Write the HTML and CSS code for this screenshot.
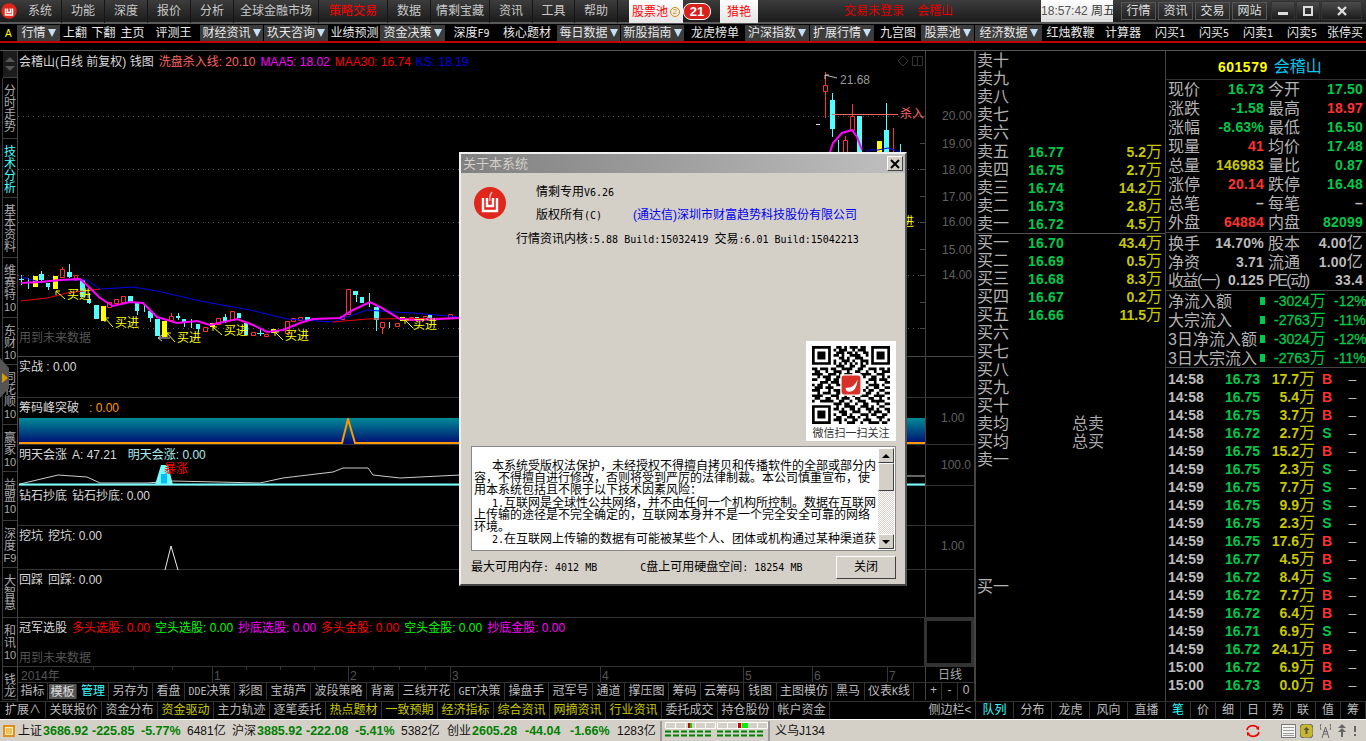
FILE: index.html
```html
<!DOCTYPE html>
<html lang="zh-CN">
<head>
    <meta charset="UTF-8">
    <title>关于本系统</title>
    <link rel="stylesheet" href="styles.css">
</head>
<body>
    <!-- menu -->
    <header class="menubar">
        <nav class="menu-items">
            <span class="menu-logo">
                <svg width="16" height="16" viewBox="0 0 32 32"><circle cx="16" cy="16" r="15.5" fill="#e1261c"/><path d="M9 11v13h14V11M13 11v8h6v-8" fill="none" stroke="#fff" stroke-width="3"/></svg>
            </span>
            <a>系统</a><a>功能</a><a>深度</a><a>报价</a><a>分析</a><a>全球金融市场</a>
            <a class="menu-hot">策略交易</a><a>数据</a><a>情剩宝藏</a><a>资讯</a><a>工具</a><a>帮助</a>
            <i></i>
            <span class="menu-pool">股票池<em>2</em></span>
            <span class="menu-badge"><b>21</b></span>
            <i></i>
            <span class="menu-pool">猎艳</span>
        </nav>
        <div class="menu-status"><span>交易未登录</span><span>会稽山</span></div>
        <div class="clock"><span>18:57:42</span> 周五</div>
        <div class="top-btns"><a>行情</a><a>资讯</a><a>交易</a><a>网站</a></div>
        <div class="win-btns">
            <a><svg width="10" height="10"><rect x="0" y="6" width="10" height="3" fill="#ddd"/></svg></a>
            <a><svg width="10" height="10"><rect x="1" y="1" width="8" height="8" fill="none" stroke="#ddd" stroke-width="2"/></svg></a>
            <a class="win-close"><svg width="10" height="10"><path d="M1 1l8 8M9 1l-8 8" stroke="#ddd" stroke-width="2.4"/></svg></a>
        </div>
    </header>

    <!-- toolbar -->
    <div class="toolbar">
        <div class="tool-items">
            <span class="tool-a">A</span>
            <a class="drop">行情<u></u></a>
            <a>上翻</a><a>下翻</a><a>主页</a><a>评测王</a>
            <a class="drop">财经资讯<u></u></a><a class="drop">玖天咨询<u></u></a>
            <a>业绩预测</a>
            <a class="drop">资金决策<u></u></a>
            <a>深度<span class="mono">F9</span></a><a>核心题材</a>
            <a class="drop">每日数据<u></u></a><a class="drop">新股指南<u></u></a>
            <a>龙虎榜单</a>
            <a class="drop">沪深指数<u></u></a><a class="drop">扩展行情<u></u></a>
            <a>九宫图</a>
            <a class="drop">股票池<u></u></a><a class="drop">经济数据<u></u></a>
            <a>红烛教鞭</a><a>计算器</a><a>闪买<span class="mono">1</span></a><a>闪买<span class="mono">5</span></a><a>闪卖<span class="mono">1</span></a><a>闪卖<span class="mono">5</span></a><a>张停买</a>
        </div>
    </div>

    <main class="main">
        <!-- left vertical tabs -->
        <aside class="side-tabs">
            <div class="side-scroll"><u class="up"></u><u class="down"></u></div>
            <a>分<br>时<br>走<br>势</a>
            <a class="on">技<br>术<br>分<br>析</a>
            <a>基<br>本<br>资<br>料</a>
            <a>维<br>赛<br>特<br><small>10</small></a>
            <a>东<br>财<br><small>10</small></a>
            <a>同<br>花<br>顺<br><small>10</small></a>
            <a>赢<br>家<br><small>10</small></a>
            <a>益<br>盟<br><small>10</small></a>
            <a>深<br>度<br><small>F9</small></a>
            <a>大<br>智<br>慧</a>
            <a>和<br>讯<br><small>10</small></a>
            <a>钱<br>龙</a>
        </aside>
        <div class="side-handle"><u></u></div>

        <!-- chart column -->
        <section class="chart">
            <div class="pane pane-main">
                <div class="pane-label">
                    <span>会稽山(日线 前复权) 钱图</span>
                    <span class="pink">洗盘杀入线: 20.10</span>
                    <span class="magenta">MAA5: 18.02</span>
                    <span class="red">MAA30: 16.74</span>
                    <span class="blue">KS: 18.19</span>
                </div>
                <svg class="pane-svg" width="957" height="306" viewBox="18 51 957 306">
                    <path class="grid-dots" d="M18 116.5H925M18 169.5H925M18 222.5H925M18 275.5H925M18 328.5H925"/>
                    <path class="axis-line" d="M925.5 51V357M920 116.5h5M920 143.5h5M920 169.5h5M920 196.5h5M920 222.5h5M920 249.5h5M920 275.5h5M920 302.5h5M920 328.5h5"/>
                    <g class="axis-text">
                        <text x="942" y="120">20.00</text><text x="942" y="148">19.00</text><text x="942" y="174">18.00</text>
                        <text x="942" y="201">17.00</text><text x="942" y="226">16.00</text><text x="942" y="254">15.00</text><text x="942" y="279">14.00</text>
                    </g>
                    <path class="mark-icon" d="M903 56l5 5-5 5-5-5zM912.500 56.500h10v9h-10zM917.500 56.500v9"/>

                    <path class="wick-cy" d="M21.500 275V285M19 279.500h5M28.500 278V289M41.500 271V283M48.500 283V290M69.500 264V278M89.500 293V304M137.500 311V315M144.500 305V312M150.500 318V322M178.500 313V320M184.500 322V327M191.500 319V328M198.500 329V332M225.500 314V323M260.500 328V336M257 333.500h7M356.500 295V302M369.500 293V307M376.500 320V331M389.500 322V328M832.500 93V137M838.500 140V152M886.500 103V130M900.500 144V152"/>
                    <path class="body-cy" d="M39 274h5v6h-5zM46 283h4v4h-4zM67 272h5v5h-5zM80 280h5v17h-5zM87 299h4v4h-4zM94 305h5v14h-5zM128 296h5v6h-5zM135 303h4v8h-4zM148 311h5v7h-5zM155 319h5v17h-5zM176 316h4v2h-4zM182 319h4v3h-4zM196 324h4v5h-4zM223 317h4v5h-4zM237 313h4v5h-4zM244 323h4v12h-4zM305 317h5v3h-5zM353 291h5v4h-5zM360 297h4v6h-4zM374 307h5v13h-5zM415 317h4v3h-4zM428 315h4v3h-4zM830 100h5v29h-5zM857 116h5v36h-5zM884 130h5v22h-5z"/>
                    <path class="body-up" d="M62.500 267V269M171.500 313V316M382.500 327V334M825.500 72V85M825.500 92V118M852.500 104V116M893.500 128V152M845.500 136V140M60.500 269.500h4v8h-4zM74.500 275.500h3v5h-3zM107.500 302.500h4v5h-4zM114.500 299.500h4v4h-4zM121.500 296.500h4v6h-4zM169.500 316.500h4v4h-4zM203.500 327.500h4v4h-4zM216.500 318.500h4v6h-4zM230.500 311.500h4v9h-4zM251.500 332.500h4v3h-4zM264.500 334.500h4v2h-4zM285.500 321.500h4v12h-4zM291.500 318.500h4v3h-4zM298.500 317.500h4v3h-4zM340.500 316.500h4v3h-4zM346.500 289.500h4v25h-4zM380.500 322.500h4v5h-4zM395.500 323.500h4v3h-4zM409.500 317.500h4v3h-4zM423.500 316.500h4v3h-4zM448.500 314.500h4v4h-4zM823.500 85.500h4v6h-4zM850.500 116.500h4v14h-4zM843.500 140.500h4v13h-4z"/>
                    <path class="body-ye" d="M33 276h5v11h-5zM53 276h5v13h-5zM101 306h5v15h-5zM162 321h5v16h-5zM210 323h5v4h-5zM271 329h5v4h-5zM400 317h5v4h-5zM877 141h5v11h-5z"/>

                    <polyline class="line-blue" points="21,277 40,282 67,280 87,280 100,289 133,287 157,291 200,301 250,310 287,319 333,322 367,310 393,312 413,313 460,317 820,200 868,150 878,150 888,148 900,152"/>
                    <polyline class="line-red" points="21,301 47,298 67,293 100,289"/>
                    <polyline class="line-red" points="333,322 367,319 460,318"/>
                    <polyline class="line-ma" points="21,283 40,282 60,280 80,279 90,288 100,298 113,306 130,302 143,303 157,317 177,323 197,321 210,325 237,319 253,325 267,332 283,330 300,323 313,319 340,318 353,310 370,302 380,307 400,319 417,320 460,318"/>
                    <polyline class="line-ma" points="830,152 833,143 842,133 852,130 857,137 862,150"/>

                    <path class="line-kill" d="M832 114.500H898"/>
                    <text class="txt-kill" x="900" y="118">杀入</text>
                    <path class="arrow-hi" d="M825 75l12 3M825 75h4M825 75v4"/>
                    <text class="txt-hi" x="840" y="84">21.68</text>
                    <path class="dash" d="M816 124.500h4"/>

                    <path class="arrow-buy" d="M56 291l9 8M56 291h4M56 291v4M105 318l8 9M105 318h4M105 318v4M167 333l8 9M167 333h4M167 333v4M213 327l9 8M213 327h4M213 327v4M275 332l8 8M275 332h4M275 332v4M405 320l8 8M405 320h4M405 320v4"/>
                    <g class="txt-buy">
                        <text x="67" y="299">买进</text><text x="115" y="327">买进</text><text x="177" y="342">买进</text>
                        <text x="224" y="335">买进</text><text x="285" y="340">买进</text><text x="413" y="329">买进</text><text x="890" y="226">买进</text>
                    </g>
                    <path class="arrow-white" d="M158 338h12M158 338l4-3M158 338l4 3"/>
                    <text class="txt-future" x="19" y="342">用到未来数据</text>
                </svg>
            </div>

            <div class="pane pane-a">
                <div class="plot"><div class="pane-label"><span>实战 : 0.00</span></div></div>
                <div class="axis"></div>
            </div>

            <div class="pane pane-b">
                <div class="plot">
                    <div class="pane-label"><span>筹码峰突破</span><span class="orange">: 0.00</span></div>
                    <div class="chip-bar">
                        <svg width="906" height="26" viewBox="19 418 906 26"><path class="line-chip" d="M19 443H342L348 419L355 443H925"/></svg>
                    </div>
                </div>
                <div class="axis">1.00</div>
            </div>

            <div class="pane pane-c">
                <div class="plot">
                    <div class="pane-label"><span>明天会涨</span><span>A: 47.21</span><span class="pale">明天会涨: 0.00</span></div>
                    <svg class="pane-svg" width="907" height="41" viewBox="18 445 907 41">
                        <polyline class="line-white" points="20,484 58,475 87,477 100,483 147,483 173,481 260,483 283,478 333,472 343,468 368,468 373,475 400,478 460,475 925,476"/>
                        <path class="spike" d="M155 485L161 465H168L173 485Z"/>
                        <rect class="spike-in" x="161" y="474" width="6" height="11"/>
                        <path class="line-cy" d="M19 484.500H925"/>
                        <text class="txt-up" x="164" y="473">暴涨</text>
                    </svg>
                </div>
                <div class="axis">100.0</div>
            </div>

            <div class="pane pane-d">
                <div class="plot"><div class="pane-label"><span>钻石抄底</span><span>钻石抄底: 0.00</span></div></div>
                <div class="axis"></div>
            </div>

            <div class="pane pane-e">
                <div class="plot">
                    <div class="pane-label"><span>挖坑</span><span>挖坑: 0.00</span></div>
                    <svg class="pane-svg" width="907" height="44" viewBox="18 526 907 44"><path class="line-peak" d="M165 570L171 546L178 570"/></svg>
                </div>
                <div class="axis">1.00</div>
            </div>

            <div class="pane pane-f">
                <div class="plot"><div class="pane-label"><span>回踩</span><span>回踩: 0.00</span></div></div>
                <div class="axis"></div>
            </div>

            <div class="pane pane-g">
                <div class="plot">
                    <div class="pane-label">
                        <span>冠军选股</span><span class="red">多头选股: 0.00</span><span class="green">空头选股: 0.00</span>
                        <span class="magenta">抄底选股: 0.00</span><span class="red">多头金股: 0.00</span>
                        <span class="green">空头金股: 0.00</span><span class="magenta">抄底金股: 0.00</span>
                    </div>
                    <div class="future">用到未来数据</div>
                </div>
                <div class="axis axis-box"></div>
            </div>

            <div class="date-row">
                <svg width="907" height="16" viewBox="18 667 907 16">
                    <path class="date-ticks" d="M93.500 667v3M133.500 667v3M172.500 667v3M212.500 667v16M246.500 667v3M280.500 667v3M314.500 667v3M348.500 667v16M373.500 667v3M399.500 667v3M425.500 667v3M450.500 667v16M600.500 667v16M743.500 667v16M812.500 667v16M887.500 667v16"/>
                    <g class="date-text">
                        <text x="21" y="680">2014年</text><text x="214" y="680">1</text><text x="350" y="680">2</text><text x="452" y="680">3</text>
                        <text x="602" y="680">4</text><text x="745" y="680">5</text><text x="814" y="680">6</text><text x="889" y="680">7</text>
                    </g>
                </svg>
                <span class="date-kind">日线</span>
            </div>

            <div class="tab-row">
                <div class="tabs-a">
                    <a>指标</a><a class="on">模板</a><a class="cyan">管理</a><a>另存为</a><a>看盘</a><a><span class="mono">DDE</span>决策</a><a>彩图</a><a>宝葫芦</a><a>波段策略</a><a>背离</a><a>三线开花</a>
                    <a><span class="mono">GET</span>决策</a><a>操盘手</a><a>冠军号</a><a>通道</a><a>撑压图</a><a>筹码</a><a>云筹码</a><a>钱图</a><a>主图模仿</a><a>黑马</a><a>仪表<span class="mono">K</span>线</a>
                </div>
                <div class="zoom-btns"><a>+</a><a>-</a><a>0</a></div>
            </div>
        </section>

        <!-- order book -->
        <section class="book">
            <div class="book-row"><span>卖十</span></div>
            <div class="book-row"><span>卖九</span></div>
            <div class="book-row"><span>卖八</span></div>
            <div class="book-row"><span>卖七</span></div>
            <div class="book-row"><span>卖六</span></div>
            <div class="book-row"><span>卖五</span><b>16.77</b><em>5.2<i>万</i></em></div>
            <div class="book-row"><span>卖四</span><b>16.75</b><em>2.7<i>万</i></em></div>
            <div class="book-row"><span>卖三</span><b>16.74</b><em>14.2<i>万</i></em></div>
            <div class="book-row"><span>卖二</span><b>16.73</b><em>2.8<i>万</i></em></div>
            <div class="book-row"><span>卖一</span><b>16.72</b><em>4.5<i>万</i></em></div>
            <div class="book-line"></div>
            <div class="book-row"><span>买一</span><b>16.70</b><em>43.4<i>万</i></em></div>
            <div class="book-row"><span>买二</span><b>16.69</b><em>0.5<i>万</i></em></div>
            <div class="book-row"><span>买三</span><b>16.68</b><em>8.3<i>万</i></em></div>
            <div class="book-row"><span>买四</span><b>16.67</b><em>0.2<i>万</i></em></div>
            <div class="book-row"><span>买五</span><b>16.66</b><em>11.5<i>万</i></em></div>
            <div class="book-row"><span>买六</span></div>
            <div class="book-row"><span>买七</span></div>
            <div class="book-row"><span>买八</span></div>
            <div class="book-row"><span>买九</span></div>
            <div class="book-row"><span>买十</span></div>
            <div class="book-row"><span>卖均</span><s>总卖</s></div>
            <div class="book-row"><span>买均</span><s>总买</s></div>
            <div class="book-row"><span>卖一</span></div>
            <div class="book-row book-low"><span>买一</span></div>
        </section>

        <!-- quote -->
        <section class="quote">
            <div class="q-head"><b>601579</b><span>会稽山</span></div>
            <div class="q-block">
                <div class="q-row"><span>现价</span><b class="g">16.73</b><span>今开</span><b class="g">17.50</b></div>
                <div class="q-row"><span>涨跌</span><b class="g">-1.58</b><span>最高</span><b class="r">18.97</b></div>
                <div class="q-row"><span>涨幅</span><b class="g">-8.63%</b><span>最低</span><b class="g">16.50</b></div>
                <div class="q-row"><span>现量</span><b class="r">41</b><span>均价</span><b class="g">17.48</b></div>
                <div class="q-row"><span>总量</span><b class="y">146983</b><span>量比</span><b class="g">0.87</b></div>
                <div class="q-row"><span>涨停</span><b class="r">20.14</b><span>跌停</span><b class="g">16.48</b></div>
                <div class="q-row"><span>总笔</span><b class="w">–</b><span>每笔</span><b class="w">–</b></div>
                <div class="q-row"><span>外盘</span><b class="r">64884</b><span>内盘</span><b class="g">82099</b></div>
            </div>
            <div class="q-block">
                <div class="q-row"><span>换手</span><b class="w">14.70%</b><span>股本</span><b class="w">4.00<i>亿</i></b></div>
                <div class="q-row"><span>净资</span><b class="w">3.71</b><span>流通</span><b class="w">1.00<i>亿</i></b></div>
                <div class="q-row"><span class="tight">收益(一)</span><b class="w">0.125</b><span class="tight">PE(动)</span><b class="w">33.4</b></div>
            </div>
            <div class="q-block">
                <div class="flow-row"><span>净流入额</span><u></u><b>-3024<i>万</i></b><b>-12%</b></div>
                <div class="flow-row"><span>大宗流入</span><u></u><b>-2763<i>万</i></b><b>-11%</b></div>
                <div class="flow-row"><span>3日净流入额</span><u></u><b>-3024<i>万</i></b><b>-12%</b></div>
                <div class="flow-row"><span>3日大宗流入</span><u></u><b>-2763<i>万</i></b><b>-11%</b></div>
            </div>
            <div class="ticks">
                <div class="tick"><b>14:58</b><b class="g">16.73</b><b class="y">17.7<i>万</i></b><b class="r">B</b><span>–</span></div>
                <div class="tick"><b>14:58</b><b class="g">16.75</b><b class="y">5.4<i>万</i></b><b class="r">B</b><span>–</span></div>
                <div class="tick"><b>14:58</b><b class="g">16.75</b><b class="y">3.7<i>万</i></b><b class="r">B</b><span>–</span></div>
                <div class="tick"><b>14:58</b><b class="g">16.72</b><b class="y">2.7<i>万</i></b><b class="g">S</b><span>–</span></div>
                <div class="tick"><b>14:59</b><b class="g">16.75</b><b class="y">15.2<i>万</i></b><b class="r">B</b><span>–</span></div>
                <div class="tick"><b>14:59</b><b class="g">16.75</b><b class="y">2.3<i>万</i></b><b class="g">S</b><span>–</span></div>
                <div class="tick"><b>14:59</b><b class="g">16.75</b><b class="y">7.7<i>万</i></b><b class="g">S</b><span>–</span></div>
                <div class="tick"><b>14:59</b><b class="g">16.75</b><b class="y">9.9<i>万</i></b><b class="g">S</b><span>–</span></div>
                <div class="tick"><b>14:59</b><b class="g">16.75</b><b class="y">2.3<i>万</i></b><b class="g">S</b><span>–</span></div>
                <div class="tick"><b>14:59</b><b class="g">16.75</b><b class="y">17.6<i>万</i></b><b class="r">B</b><span>–</span></div>
                <div class="tick"><b>14:59</b><b class="g">16.77</b><b class="y">4.5<i>万</i></b><b class="r">B</b><span>–</span></div>
                <div class="tick"><b>14:59</b><b class="g">16.72</b><b class="y">8.4<i>万</i></b><b class="g">S</b><span>–</span></div>
                <div class="tick"><b>14:59</b><b class="g">16.72</b><b class="y">7.7<i>万</i></b><b class="r">B</b><span>–</span></div>
                <div class="tick"><b>14:59</b><b class="g">16.72</b><b class="y">6.4<i>万</i></b><b class="r">B</b><span>–</span></div>
                <div class="tick"><b>14:59</b><b class="g">16.71</b><b class="y">6.9<i>万</i></b><b class="g">S</b><span>–</span></div>
                <div class="tick"><b>14:59</b><b class="g">16.72</b><b class="y">24.1<i>万</i></b><b class="r">B</b><span>–</span></div>
                <div class="tick"><b>15:00</b><b class="g">16.72</b><b class="y">6.9<i>万</i></b><b class="r">B</b><span>–</span></div>
                <div class="tick"><b>15:00</b><b class="g">16.73</b><b class="y">0.0<i>万</i></b><b class="r">B</b><span>–</span></div>
            </div>
        </section>
    </main>

    <!-- lower tab strip -->
    <div class="strip">
        <div class="strip-left">
            <a>扩展∧</a><a>关联报价</a><a>资金分布</a><a class="y">资金驱动</a><a>主力轨迹</a><a>逐笔委托</a><a class="y">热点题材</a><a class="y">一致预期</a>
            <a class="y">经济指标</a><a class="y">综合资讯</a><a class="y">网摘资讯</a><a class="y">行业资讯</a><a>委托成交</a><a>持仓股份</a><a>帐户资金</a>
        </div>
        <a class="strip-side">侧边栏&lt;</a>
        <div class="strip-book"><a class="cyan">队列</a><a>分布</a><a>龙虎</a><a>风向</a><a>直播</a></div>
        <div class="strip-quote"><a class="cyan">笔</a><a>价</a><a>细</a><a>日</a><a>势</a><a>联</a><a>值</a><a>筹</a></div>
    </div>

    <!-- status bar -->
    <footer class="status">
        <span class="st-icon"><u></u></span>
        <span>上证</span><b>3686.92</b><b>-225.85</b><b>-5.77%</b><span>6481亿</span>
        <span>沪深</span><b>3885.92</b><b>-222.08</b><b>-5.41%</b><span>5382亿</span>
        <span>创业</span><b>2605.28</b><b>-44.04</b><b>-1.66%</b><span>1283亿</span>
        <i class="st-sep"></i>
        <svg width="51" height="17" viewBox="0 0 51 17">
            <path class="meter-box" d="M.5 .5h50v6H.5zM10.500 .5v6M20.500 .5v6M30.500 .5v6M40.500 .5v6"/>
            <rect x="23" y="1" width="2" height="5" fill="#c00"/><rect x="25" y="1" width="2" height="5" fill="#0d0"/>
            <path class="meter-dash" d="M0 9.500h6M8 9.500h6M16 9.500h6M24 9.500h6M32 9.500h6M40 9.500h6M0 13.500h6M8 13.500h6M16 13.500h6M24 13.500h6M32 13.500h6M40 13.500h6"/>
        </svg>
        <svg width="51" height="17" viewBox="0 0 51 17">
            <path class="meter-box" d="M.5 .5h50v6H.5zM10.500 .5v6M20.500 .5v6M30.500 .5v6M40.500 .5v6"/>
            <rect x="21" y="1" width="3" height="5" fill="#c00"/><rect x="25" y="1" width="6" height="5" fill="#0e0"/>
            <path class="meter-dash" d="M0 9.500h6M8 9.500h6M16 9.500h6M24 9.500h6M32 9.500h6M40 9.500h6M0 13.500h6M8 13.500h6M16 13.500h6M24 13.500h6M32 13.500h6M40 13.500h6"/>
        </svg>
        <i class="st-sep"></i>
        <span class="st-city">义乌J134</span>
        <div class="st-icons">
            <svg width="16" height="16" viewBox="0 0 16 16"><path d="M2 7a6 5 0 0 1 11-2M14 9a6 5 0 0 1-11 2" fill="none" stroke="#e00" stroke-width="1.6"/><path d="M14 7l-3-1 3-3zM2 9l3 1-3 3z" fill="#e00"/></svg>
            <svg width="15" height="14" viewBox="0 0 15 14"><rect x=".5" y=".5" width="14" height="13" fill="#f4f4f4" stroke="#777"/><path d="M2 3.500h11M2 6.500h11M2 9.500h11M2 11.500h11" stroke="#999"/></svg>
            <svg width="13" height="14" viewBox="0 0 13 14"><rect width="13" height="14" rx="4" fill="#c8b830" stroke="#666"/><path d="M6.500 3l3 3h-2v4h-2V6h-2z" fill="#554"/></svg>
            <svg width="11" height="16" viewBox="0 0 11 16"><path d="M5.500 4L2 15M5.500 4L9 15M3 11h5M3.500 8.500h4M1 1q-2 3 0 6M10 1q2 3 0 6" fill="none" stroke="#666"/></svg>
            <svg width="8" height="13" viewBox="0 0 8 13"><path d="M4 0l4 4H0zM4 4l4 4H0zM3 8h2v5H3z" fill="#666"/></svg>
            <svg width="4" height="10" viewBox="0 0 4 10"><path d="M1 0h2v6H1zM1 8h2v2H1z" fill="#666"/></svg>
        </div>
    </footer>

    <!-- about dialog -->
    <div class="dialog">
        <div class="dlg-title">
            <span>关于本系统</span>
            <a class="dlg-x"><svg width="10" height="10"><path d="M1 1l8 8M9 1l-8 8" stroke="#000" stroke-width="2"/></svg></a>
        </div>
        <div class="dlg-body">
            <div class="dlg-head">
                <svg class="dlg-logo" width="32" height="32" viewBox="0 0 32 32">
                    <circle cx="16" cy="16" r="16" fill="#e1261c"/>
                    <path d="M9 11v13h14V11M13 11v8h6v-8" fill="none" stroke="#fff" stroke-width="2.4"/>
                    <path d="M18 5q-3 4-2 9" fill="none" stroke="#fbb" stroke-width="1.4"/>
                </svg>
                <div class="dlg-lines">
                    <div>情剩专用<span class="mono">V6.26</span></div>
                    <div class="dlg-copy"><span>版权所有<span class="mono">(C)</span></span><span class="dlg-link">(通达信)深圳市财富趋势科技股份有限公司</span></div>
                </div>
            </div>
            <div class="dlg-kernel">行情资讯内核<span class="mono">:5.88 Build:15032419 </span>交易<span class="mono">:6.01 Build:15042213</span></div>
            <div class="qr">
                <svg width="78" height="78" viewBox="0 0 29 29">
                    <defs><path id="finder" d="M0 0h7v7H0zM1 1v5h5V1zM2 2h3v3H2z" fill-rule="evenodd"/></defs>
                    <use href="#finder"/><use href="#finder" x="22"/><use href="#finder" y="22"/>
                    <path class="qr-dots" d="M9 .5h2M12 .5h1M14 .5h3M18 .5h2M8 1.500h1M10 1.500h3M15 1.500h1M17 1.500h3M9 2.500h3M13 2.500h2M16 2.500h1M19 2.500h2M8 3.500h2M11 3.500h1M14 3.500h4M20 3.500h1M10 4.500h2M13 4.500h1M16 4.500h3M8 5.500h1M11 5.500h3M15 5.500h1M18 5.500h3M8 6.500h1M10 6.500h1M12 6.500h1M14 6.500h1M16 6.500h1M18 6.500h1M20 6.500h1M9 7.500h3M14 7.500h2M18 7.500h2M0 8.500h2M3 8.500h3M7 8.500h2M11 8.500h4M17 8.500h2M21 8.500h3M25 8.500h2M28 8.500h1M1 9.500h2M5 9.500h1M8 9.500h3M13 9.500h1M16 9.500h2M20 9.500h1M23 9.500h1M26 9.500h3M0 10.500h4M6 10.500h3M10 10.500h1M12 10.500h3M18 10.500h4M24 10.500h3M2 11.500h1M4 11.500h3M9 11.500h3M19 11.500h1M22 11.500h2M26 11.500h1M28 11.500h1M0 12.500h2M5 12.500h2M8 12.500h2M21 12.500h3M25 12.500h3M3 13.500h3M7 13.500h3M20 13.500h1M23 13.500h1M27 13.500h2M0 14.500h1M2 14.500h2M6 14.500h1M9 14.500h2M21 14.500h4M26 14.500h1M1 15.500h3M5 15.500h3M20 15.500h1M23 15.500h2M27 15.500h2M0 16.500h3M6 16.500h1M8 16.500h3M12 16.500h1M19 16.500h1M21 16.500h2M25 16.500h2M2 17.500h1M4 17.500h3M9 17.500h3M14 17.500h4M20 17.500h2M24 17.500h1M27 17.500h2M0 18.500h4M7 18.500h3M12 18.500h1M15 18.500h1M18 18.500h3M23 18.500h4M1 19.500h2M5 19.500h2M9 19.500h1M11 19.500h3M16 19.500h2M21 19.500h2M25 19.500h1M28 19.500h1M0 20.500h1M3 20.500h5M10 20.500h2M14 20.500h1M17 20.500h3M22 20.500h5M8 21.500h3M12 21.500h2M16 21.500h1M19 21.500h2M24 21.500h1M27 21.500h2M9 22.500h1M12 22.500h4M18 22.500h3M22 22.500h1M25 22.500h2M8 23.500h2M11 23.500h1M14 23.500h2M17 23.500h1M20 23.500h3M24 23.500h1M27 23.500h2M10 24.500h3M15 24.500h3M21 24.500h1M23 24.500h3M28 24.500h1M8 25.500h1M11 25.500h2M14 25.500h1M18 25.500h3M22 25.500h2M26 25.500h2M9 26.500h2M13 26.500h3M17 26.500h1M20 26.500h1M24 26.500h3M8 27.500h3M12 27.500h1M15 27.500h2M19 27.500h3M25 27.500h1M28 27.500h1M10 28.500h1M13 28.500h3M18 28.500h1M21 28.500h4M26 28.500h2"/>
                    <rect x="10.500" y="10.500" width="8" height="8" fill="#fff"/>
                    <rect x="11" y="11" width="7" height="7" rx="1" fill="#d8312a"/>
                    <path d="M12.500 15.500q3 .5 4.500-3-.5 4.500-3 4.500-1.500 0-1.500-1.500z" fill="#fff"/>
                </svg>
                <span>微信扫一扫关注</span>
            </div>
            <div class="terms">
                <div class="terms-text">
                    <div class="indent">本系统受版权法保护，未经授权不得擅自拷贝和传播软件的全部或部分内</div>
                    <div>容，不得擅自进行修改，否则将受到严厉的法律制裁。本公司慎重宣布，使</div>
                    <div>用本系统包括且不限于以下技术因素风险：</div>
                    <div class="indent"><span class="mono">1.</span>互联网是全球性公共网络，并不由任何一个机构所控制。数据在互联网</div>
                    <div>上传输的途径是不完全确定的，互联网本身并不是一个完全安全可靠的网络</div>
                    <div>环境。</div>
                    <div class="indent"><span class="mono">2.</span>在互联网上传输的数据有可能被某些个人、团体或机构通过某种渠道获</div>
                </div>
                <div class="scroll">
                    <a><u class="up"></u></a>
                    <a class="thumb"></a>
                    <i></i>
                    <a><u class="down"></u></a>
                </div>
            </div>
            <div class="dlg-foot">
                <span>最大可用内存<span class="mono">: 4012 MB</span></span>
                <span class="dlg-disk"><span class="mono">C</span>盘上可用硬盘空间<span class="mono">: 18254 MB</span></span>
                <a class="dlg-btn">关闭</a>
            </div>
        </div>
    </div>
</body>
</html>
```

FILE: styles.css
```css
* {
  box-sizing: border-box;
}

html, body {
  margin: 0;
  height: 741px;
  overflow: hidden;
}

body {
  width: 1366px;
  position: relative;
  background-color: #000;
  color: #c0c0c0;
  font-family: "Liberation Sans", "Noto Sans CJK SC", sans-serif;
  font-size: 12px;
  line-height: 14px;
  display: flex;
  flex-direction: column;
}

a {
  display: block;
  text-decoration: none;
}

i, em, u, s {
  font-style: normal;
  text-decoration: none;
}

.mono {
  font-family: "DejaVu Sans Mono", monospace;
  font-size: 10px;
}

/* menu */
.menubar {
  height: 24px;
  display: flex;
  align-items: stretch;
  background: linear-gradient(#3c3c3c, #1e1e1e 90%);
  border-bottom: 2px solid #5a5a5a;
}

.menu-items {
  display: grid;
  grid-template-columns: 19px 43px 43px 43px 43px 43px 85px 69px 43px 59px 43px 42px 43px 11px 54px 29px 8px 38px;
  width: 758px;
}

.menu-items > a {
  text-align: center;
  line-height: 23px;
  color: #c8c8c8;
  border-right: 1px solid #161616;
}

.menu-items > a.menu-hot {
  color: #f00;
}

.menu-logo {
  padding: 3px 0 0 1px;
}

.menu-pool {
  display: flex;
  align-items: center;
  justify-content: center;
  gap: 2px;
  color: #f00;
  background: linear-gradient(#fff, #e4e4e4);
}

.menu-pool em {
  width: 10px;
  height: 10px;
  border: 1px solid #d08a00;
  border-radius: 50%;
  color: #d08a00;
  font-size: 8px;
  line-height: 8px;
  text-align: center;
}

.menu-badge {
  display: flex;
  align-items: center;
}

.menu-badge b {
  width: 28px;
  height: 17px;
  border: 1px solid #fff;
  border-radius: 8px;
  background: #d8201c;
  color: #fff;
  line-height: 15px;
  font-size: 13px;
  text-align: center;
}

.menu-status {
  display: flex;
  gap: 13px;
  margin-left: 86px;
  color: #e00000;
  line-height: 23px;
}

.clock {
  width: 72px;
  margin: 0 0 0 88px;
  background: linear-gradient(#fff, #dcdcdc);
  color: #333;
  line-height: 23px;
  text-align: center;
  white-space: nowrap;
}

.clock span {
  color: #555;
  font-size: 12px;
}

.top-btns {
  display: flex;
  gap: 2px;
  margin-left: 8px;
  padding: 2px 0;
}

.top-btns a {
  width: 35px;
  border: 1px solid #555;
  background: linear-gradient(#3e3e3e, #222);
  color: #ddd;
  text-align: center;
  line-height: 16px;
}

.win-btns {
  display: flex;
  gap: 1px;
  margin-left: 4px;
  padding: 1px 0 2px;
}

.win-btns a {
  width: 24px;
  display: flex;
  align-items: center;
  justify-content: center;
  background: linear-gradient(#4c4c4c, #1c1c1c);
  border: 1px solid #333;
}

.win-btns .win-close {
  width: 41px;
}

/* toolbar */
.toolbar {
  height: 27px;
  background: #000;
  border-bottom: 1px solid #555;
}

.tool-items {
  height: 19px;
  border-bottom: 2px solid #c00000;
  display: grid;
  grid-template-columns: 17px 44px 28px 29px 29px 53px 64px 65px 51px 66px 51px 60px 64px 64px 60px 65px 65px 46px 54px 68px 55px 50px 44px 44px 44px 44px 42px;
  align-items: start;
}

.tool-items a {
  text-align: center;
  line-height: 19px;
  color: #e8e8e8;
  white-space: nowrap;
  overflow: hidden;
}

.tool-items .drop {
  margin-right: 1px;
  background: #3c3c3c;
  height: 16px;
  line-height: 16px;
  margin-top: 1px;
  display: flex;
  align-items: center;
  justify-content: center;
  gap: 2px;
}

.drop u {
  width: 0;
  height: 0;
  border-left: 4px solid transparent;
  border-right: 4px solid transparent;
  border-top: 8px solid #c8e0f4;
}

.tool-a {
  color: #ff0;
  padding-left: 5px;
  line-height: 19px;
  font-size: 10px;
}

/* main */
.main {
  height: 650px;
  display: flex;
  position: relative;
}

.side-tabs {
  width: 18px;
  display: grid;
  grid-template-rows: 27px 61px 59px 60px 60px 47px 60px 47px 49px 47px 50px 49px 33px;
  border-right: 1px solid #444;
  background: #000;
}

.side-scroll {
  margin-left: 3px;
  display: flex;
  flex-direction: column;
  align-items: center;
  justify-content: center;
  gap: 4px;
  background: #1c1c1c;
  border-bottom: 1px solid #444;
}

.side-scroll u.up, .side-scroll u.down {
  border-style: solid;
  border-color: transparent;
  border-width: 5px;
}

.side-scroll u.up {
  border-bottom-color: #555;
  border-top-width: 0;
}

.side-scroll u.down {
  border-top-color: #555;
  border-bottom-width: 0;
}

.side-tabs a {
  margin-left: 2px;
  border-bottom: 1px solid #3a3a3a;
  border-left: 1px solid #3a3a3a;
  text-align: center;
  padding-top: 7px;
  line-height: 12px;
  color: #aaa;
  overflow: hidden;
}

.side-tabs a.on {
  color: #4ff;
}

.side-tabs small {
  font-size: 11px;
}

.side-handle {
  position: absolute;
  left: 0;
  top: 307px;
  width: 9px;
  height: 40px;
  background: #555;
  clip-path: polygon(0 0, 100% 25%, 100% 75%, 0 100%);
}

.side-handle u {
  position: absolute;
  left: 2px;
  top: 15px;
  border-left: 6px solid #d89a00;
  border-top: 5px solid transparent;
  border-bottom: 5px solid transparent;
}

/* chart */
.chart {
  width: 957px;
  display: flex;
  flex-direction: column;
  border-right: 1px solid #444;
}

.pane {
  display: flex;
  position: relative;
  border-bottom: 1px solid #333;
}

.pane-main { height: 306px; display: block; border-color: #444; }
.pane-main .pane-label { padding-top: 4px; }
.pane-a { height: 41px; }
.pane-b { height: 47px; }
.pane-c { height: 41px; }
.pane-d { height: 40px; }
.pane-e { height: 44px; }
.pane-f { height: 48px; }
.pane-g { height: 49px; }

.plot {
  width: 907px;
  position: relative;
}

.axis {
  width: 49px;
  border-left: 1px solid #444;
  color: #606060;
  padding: 13px 0 0 15px;
}

.axis-box {
  border: 3px solid #333;
  width: 50px;
}

.pane-label {
  display: flex;
  gap: 5px;
  padding: 3px 0 0 1px;
  color: #d8d8d8;
  white-space: nowrap;
  height: 20px;
  position: relative;
  z-index: 1;
}

.pink { color: #ff6464; }
.magenta { color: #f0f; }
.red { color: #f00; }
.blue { color: #0000e6; }
.orange { color: #ff9900; margin-left: 5px; }
.green { color: #0f0; }
.pale { color: #a8ecf0; margin-left: 6px; }
.cyan { color: #3ff; }

.pane-svg {
  position: absolute;
  left: 0;
  top: 0;
}

.grid-dots {
  stroke: #555;
  stroke-dasharray: 1 4;
  fill: none;
}

.axis-line {
  stroke: #444;
  fill: none;
}

.axis-text text {
  fill: #606060;
  font-size: 12px;
}

.mark-icon {
  stroke: #333;
  fill: none;
}

.wick-cy {
  stroke: #54ffff;
  fill: none;
}

.body-cy { fill: #54ffff; }
.body-ye { fill: #ff0; }

.body-up {
  stroke: #ff3232;
  fill: none;
}

.line-blue, .line-red, .line-ma, .line-white, .line-peak {
  fill: none;
}

.line-blue { stroke: #0000f0; }
.line-red { stroke: #f00000; }
.line-ma { stroke: #f0f; stroke-width: 2; }
.line-white { stroke: #ccc; }
.line-peak { stroke: #eee; }

.line-kill { stroke: #ff6464; }
.txt-kill { fill: #ff6464; font-size: 12px; }
.arrow-hi { stroke: #bbb; fill: none; }
.txt-hi { fill: #999; font-size: 12px; }
.dash { stroke: #ddd; }
.arrow-buy { stroke: #ff0; fill: none; }
.txt-buy text { fill: #ff0; font-size: 12px; }
.arrow-white { stroke: #ccc; fill: none; }
.txt-future { fill: #555; font-size: 12px; }

.chip-bar {
  margin-left: 1px;
  height: 26px;
  background: linear-gradient(#008c98, #000a70);
}

.chip-bar svg {
  display: block;
}

.line-chip {
  fill: none;
  stroke: #ff9900;
  stroke-width: 2;
}

.spike { fill: #7ff; }
.spike-in { fill: #00bfff; }
.line-cy { stroke: #7ff; stroke-width: 2; }
.txt-up { fill: #f00; font-size: 12px; }

.future {
  color: #555;
  position: absolute;
  left: 1px;
  bottom: 1px;
}

.date-row {
  height: 16px;
  display: flex;
  border-bottom: 1px solid #333;
}

.date-row svg {
  display: block;
}

.date-ticks {
  stroke: #333;
  fill: none;
}

.date-text text {
  fill: #555;
  font-size: 12px;
}

.date-kind {
  width: 49px;
  border-left: 1px solid #444;
  text-align: center;
  line-height: 17px;
  color: #aaa;
}

.tab-row {
  height: 17px;
  display: flex;
}

.tabs-a {
  width: 907px;
  display: grid;
  grid-template-columns: 30px 30px 31px 44px 32px 50px 32px 44px 56px 32px 56px 50px 44px 44px 32px 44px 32px 43px 33px 55px 33px 49px;
}

.tabs-a a, .strip a {
  text-align: center;
  color: #bbb;
  border-right: 1px solid #333;
  white-space: nowrap;
  overflow: hidden;
  line-height: 16px;
}

.tabs-a a.on {
  background: #555;
  margin: 1px;
  color: #ddd;
}

.tabs-a a.cyan, .strip a.cyan {
  color: #3ff;
}

.zoom-btns {
  width: 49px;
  display: grid;
  grid-template-columns: 16px 16px 17px;
  border-left: 1px solid #444;
}

.zoom-btns a {
  text-align: center;
  color: #bbb;
  border-right: 1px solid #333;
  line-height: 15px;
}

/* order book */
.book {
  width: 191px;
  padding-top: 1px;
  border-left: 1px solid #444;
  border-right: 1px solid #444;
  flex-shrink: 0;
  overflow: hidden;
}

.book-row {
  height: 18.100px;
  display: grid;
  grid-template-columns: 51px 36px 1fr;
  padding: 0 3px 0 1px;
  align-items: center;
  line-height: 18px;
  position: relative;
}

.book-row span {
  font-size: 16px;
  color: #b4b4b4;
}

.book-row b {
  font-size: 14px;
  color: #00c84b;
  letter-spacing: .2px;
}

.book-row em {
  text-align: right;
  color: #c8c800;
  font-size: 14px;
  font-weight: bold;
}

.book-row em i {
  font-size: 16px;
  font-weight: normal;
}

.book-row s {
  grid-column: 2 / 4;
  padding-left: 44px;
  font-size: 16px;
  color: #aaa;
}

.book-line {
  height: 1px;
  background: #555;
}

.book-low {
  margin-top: 109px;
}

/* quote */
.quote {
  flex: 1;
  min-width: 0;
}

.q-head {
  height: 29px;
  border-bottom: 1px solid #333;
  display: flex;
  align-items: center;
  padding: 3px 0 0 52px;
  gap: 6px;
}

.q-head b {
  color: #ff0;
  font-size: 14px;
  letter-spacing: .5px;
}

.q-head span {
  color: #00c8f0;
  font-size: 16px;
}

.q-block {
  border-bottom: 1px solid #444;
}

.q-row {
  height: 19px;
  display: grid;
  grid-template-columns: 32px 64px 32px 1fr;
  column-gap: 0;
  padding: 0 3px 0 2px;
  align-items: center;
  white-space: nowrap;
}

.q-row span {
  font-size: 16px;
  color: #b4b4b4;
  line-height: 19px;
}

.q-row span:nth-child(3) {
  padding-left: 4px;
}

.q-row span.tight {
  letter-spacing: -1.500px;
}

.q-row b {
  font-size: 14px;
  text-align: right;
  line-height: 19px;
  letter-spacing: .2px;
}

.q-row b i {
  font-size: 16px;
  font-weight: normal;
}

.g { color: #00c84b; }
.r { color: #ff3232; }
.y { color: #c8c800; }
.w { color: #bcbcbc; }

.flow-row {
  height: 19px;
  display: grid;
  grid-template-columns: 92px 14px 60px 1fr;
  padding: 0 3px 0 2px;
  align-items: center;
  white-space: nowrap;
  color: #00c84b;
}

.flow-row span {
  font-size: 16px;
  color: #b4b4b4;
  line-height: 19px;
}

.flow-row u {
  width: 5px;
  height: 8px;
  background: #00c84b;
}

.flow-row b {
  font-size: 14px;
  font-weight: normal;
  line-height: 19px;
  -webkit-text-stroke: .3px #00c84b;
}

.flow-row b:last-child {
  text-align: right;
}

.flow-row i {
  font-size: 16px;
  -webkit-text-stroke: 0;
}

.ticks {
  padding-top: 2px;
}

.tick {
  height: 18px;
  display: grid;
  grid-template-columns: 42px 50px 55px 24px 1fr;
  padding-left: 2px;
  line-height: 18px;
  font-size: 14px;
  color: #bcbcbc;
}

.tick b:nth-child(2), .tick b:nth-child(3) {
  text-align: right;
}

.tick b:nth-child(4), .tick span {
  text-align: center;
}

.tick i {
  font-size: 16px;
  font-weight: normal;
}

/* lower strip */
.strip {
  height: 18px;
  display: flex;
  background: #000;
  border-top: 1px solid #333;
}

.strip-left {
  width: 925px;
  display: grid;
  grid-template-columns: 45px repeat(14, 56px);
  padding-left: 1px;
}

.strip a.y {
  color: #c8c800;
}

.strip-side {
  width: 51px;
}

.strip-book {
  width: 190px;
  display: grid;
  grid-template-columns: repeat(5, 38px);
}

.strip-quote {
  flex: 1;
  display: grid;
  grid-template-columns: repeat(8, 25px);
}

/* status bar */
.status {
  height: 22px;
  background: #d4d0c8;
  border-top: 1px solid #fff;
  color: #111;
  display: grid;
  grid-template-columns: 18px 25px 49px 49px 46px 45px 25px 49px 49px 46px 46px 25px 53px 45px 47px 43px 5px 52px 51px 7px 55px 1fr;
  align-items: center;
  white-space: nowrap;
  line-height: 20px;
}

.status b {
  color: #008000;
  font-size: 12.500px;
}

.st-icon {
  padding-left: 3px;
}

.st-icon u {
  display: block;
  width: 12px;
  height: 12px;
  background: #f0c060;
  border: 2px solid #e09020;
  box-shadow: inset 0 0 0 1px #fff0b0;
}

.st-sep {
  width: 2px;
  height: 20px;
  background: #999;
}

.status svg {
  display: block;
}

.meter-box {
  fill: #d4d0c8;
  stroke: #fff;
}

.meter-dash {
  stroke: #008000;
  stroke-width: 2;
  fill: none;
}

.st-icons {
  display: flex;
  align-items: center;
  gap: 7px;
  justify-content: flex-end;
  padding-right: 9px;
}

.st-icons svg:first-child {
  margin-right: 13px;
}

.st-icons svg:nth-child(2) {
  margin-right: -3px;
}

/* about dialog */
.dialog {
  position: absolute;
  left: 459px;
  top: 152px;
  width: 448px;
  height: 434px;
  background: #d4d0c8;
  border: 2px solid;
  border-color: #f0f0f0 #555 #444 #f0f0f0;
  color: #000;
  display: flex;
  flex-direction: column;
}

.dlg-title {
  height: 19px;
  display: flex;
  align-items: center;
  justify-content: space-between;
  padding: 0 2px 0 2px;
  background: linear-gradient(90deg, #808080, #c0c0c0);
  color: #d4d0c8;
  font-size: 13px;
}

.dlg-x {
  width: 16px;
  height: 15px;
  background: #d4d0c8;
  border: 1px solid;
  border-color: #fff #404040 #404040 #fff;
  display: flex;
  align-items: center;
  justify-content: center;
}

.dlg-body {
  flex: 1;
  display: flex;
  flex-direction: column;
}

.dlg-head {
  display: flex;
  padding: 8px 0 0 13px;
  height: 54px;
}

.dlg-logo {
  margin-top: 6px;
}

.dlg-lines {
  margin-left: 30px;
  line-height: 23px;
}

.dlg-copy {
  display: flex;
  width: 321px;
  justify-content: space-between;
}

.dlg-link {
  color: #0000f0;
}

.dlg-kernel {
  padding-left: 55px;
  line-height: 24px;
  height: 24px;
  white-space: pre;
}

.qr {
  width: 90px;
  height: 100px;
  margin: 90px 9px 0 auto;
  background: #fff;
  display: flex;
  flex-direction: column;
  align-items: center;
  padding-top: 5px;
  color: #333;
}

.qr svg {
  display: block;
}

.qr span {
  margin-top: 1px;
  white-space: nowrap;
  line-height: 16px;
  font-size: 11px;
}

.qr-dots {
  stroke: #000;
  stroke-width: 1;
  fill: none;
}

.terms {
  margin: 5px 9px 0 10px;
  height: 105px;
  background: #fff;
  border: 1px solid #888;
  display: flex;
}

.terms-text {
  flex: 1;
  padding: 13px 0 0 2px;
  white-space: nowrap;
  overflow: hidden;
}

.terms-text div {
  height: 12.200px;
  line-height: 12.200px;
}

.terms-text .indent {
  padding-left: 18px;
}

.scroll {
  width: 16px;
  margin: 1px;
  display: flex;
  flex-direction: column;
  background: repeating-conic-gradient(#d4d0c8 0 25%, #fff 0 50%) 0 0 / 2px 2px;
}

.scroll a {
  height: 15px;
  background: #d4d0c8;
  border: 1px solid;
  border-color: #fff #404040 #404040 #fff;
  display: flex;
  align-items: center;
  justify-content: center;
}

.scroll a.thumb {
  height: 28px;
}

.scroll i {
  flex: 1;
}

.scroll u.up {
  border-left: 4px solid transparent;
  border-right: 4px solid transparent;
  border-bottom: 4px solid #000;
}

.scroll u.down {
  border-left: 4px solid transparent;
  border-right: 4px solid transparent;
  border-top: 4px solid #000;
}

.dlg-foot {
  flex: 1;
  display: flex;
  align-items: center;
  padding: 0 9px 0 10px;
  white-space: nowrap;
}

.dlg-disk {
  margin-left: 43px;
}

.dlg-btn {
  margin-left: auto;
  width: 60px;
  height: 23px;
  border: 1px solid;
  border-color: #fff #404040 #404040 #fff;
  text-align: center;
  line-height: 21px;
  color: #000;
}
```
